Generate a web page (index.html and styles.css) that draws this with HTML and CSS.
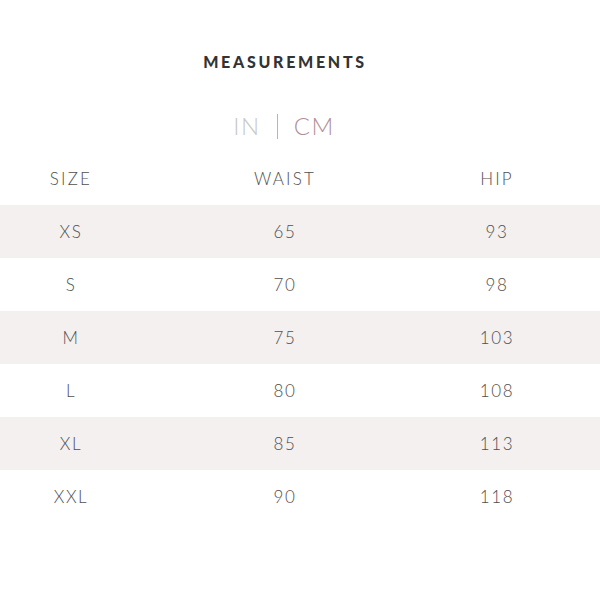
FILE: index.html
```html
<!DOCTYPE html>
<html>
<head>
<meta charset="utf-8">
<link rel="stylesheet" href="styles.css">
</head>
<body>
<div class="page">
  <h1 class="title">MEASUREMENTS</h1>
  <div class="units">
    <span class="unit unit-off">IN</span>
    <span class="sep"></span>
    <span class="unit unit-on">CM</span>
  </div>
  <div class="table">
    <div class="row head"><span>SIZE</span><span>WAIST</span><span>HIP</span></div>
    <div class="row alt"><span>XS</span><span>65</span><span>93</span></div>
    <div class="row"><span>S</span><span>70</span><span>98</span></div>
    <div class="row alt"><span>M</span><span>75</span><span>103</span></div>
    <div class="row"><span>L</span><span>80</span><span>108</span></div>
    <div class="row alt"><span>XL</span><span>85</span><span>113</span></div>
    <div class="row"><span>XXL</span><span>90</span><span>118</span></div>
  </div>
</div>
</body>
</html>
```
FILE: styles.css
```css
html, body {
  margin: 0;
  padding: 0;
  background: #fff;
}
.page {
  width: 600px;
  height: 600px;
  font-family: Lato, "Open Sans", sans-serif;
  color: #555;
}
.title {
  margin: 0;
  padding-top: 52px;
  height: 20px;
  line-height: 20px;
  text-align: center;
  font-size: 16px;
  font-weight: 900;
  letter-spacing: 2.7px;
  color: #333;
  padding-right: 30px;
}
.units {
  display: flex;
  justify-content: center;
  align-items: center;
  gap: 16px;
  margin-top: 40px;
  height: 28px;
  padding-right: 32px;
}
.unit {
  font-size: 24px;
  font-weight: 300;
  letter-spacing: 1.5px;
  line-height: 28px;
}
.unit-off { color: #c8c8c8; }
.unit-on { color: #b08f98; }
.sep {
  width: 1px;
  height: 25px;
  background: #b5b5b5;
}
.table {
  margin-top: 12px;
}
.row {
  display: grid;
  grid-template-columns: 142px 286px 138px;
  height: 53px;
  align-items: center;
  font-size: 17px;
  font-weight: 300;
  letter-spacing: 1.6px;
  color: #4f4f4f;
}
.row span {
  text-align: center;
}
.head {
  letter-spacing: 2.2px;
}
.alt {
  background: #f4f0ef;
}
```
